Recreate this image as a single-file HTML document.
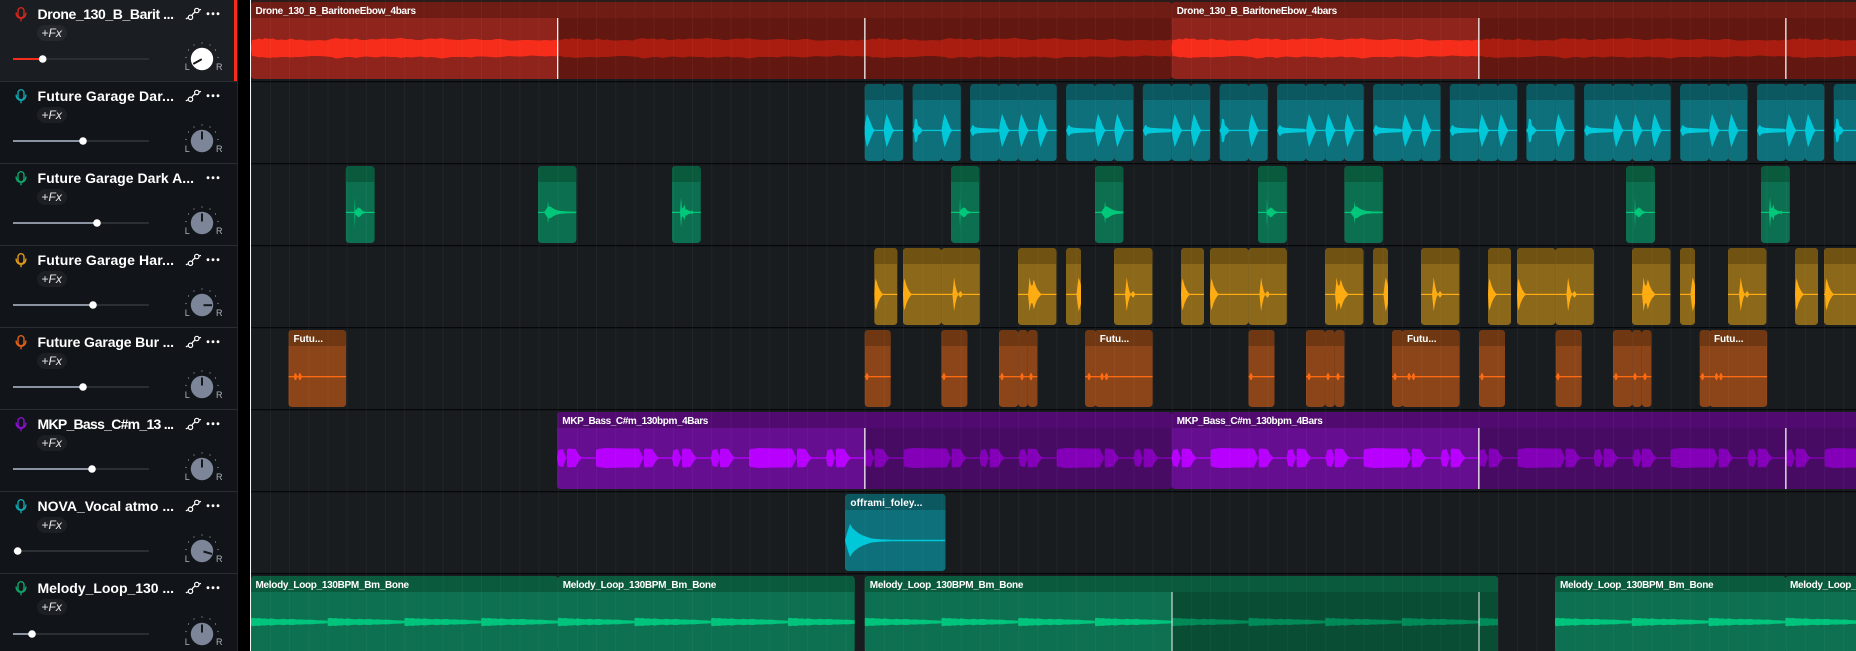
<!DOCTYPE html>
<html><head><meta charset="utf-8">
<style>
html,body{margin:0;padding:0;background:#000;width:1856px;height:651px;overflow:hidden}
svg{display:block;font-family:"Liberation Sans",sans-serif}
.r rect{height:77px;rx:3.5px;ry:3.5px}
.t{font-size:14px;font-weight:700;fill:#fff}
.h{font-size:10px;font-weight:700;fill:#fff}
.fx{font-size:12px;fill:#e8e9eb}
.lr{font-size:9px;fill:#b0b4bb}
</style></head><body>
<svg width="1856" height="651" viewBox="0 0 1856 651" xmlns="http://www.w3.org/2000/svg">
<defs>
<pattern id="grid" patternUnits="userSpaceOnUse" x="250.7" y="0" width="19.1875" height="651"><rect width="1" height="651" fill="#fff" fill-opacity=".04"/></pattern>
<clipPath id="hd"><rect x="0" y="0" width="1900" height="16"/></clipPath>

<path id="tT" d="M0 0L1.2-8L3-16.7L6-9.5L8-4.5L9.5-1.5L10.5-.7V.7L9.5 1.5L8 4.5L6 9.5L3 16.7L1.2 8Z"/>
<path id="tS" d="M0-1L1.5-2.5L2.5-12L4.5-11L5.5-5L7.5-3.5L9.5-1V1L7.5 3.5L5.5 5L4.5 11L2.5 12L1.5 2.5L0 1Z"/>
<path id="tL" d="M0 0L2-5L3-5.5L4.5-3.5L8-2.7L15-2.2L27-1.7L28.8-.7V.7L27 1.7L15 2.2L8 2.7L4.5 3.5L3 5.5L2 5Z"/>
<path id="gA" d="M8.5 0L9-15L9.5-2L11-3.5L12.5-5L14.5-4L16-2L18-1L20-.6V.6L18 1L16 2L14.5 4L12.5 5L11 3.5L9.5 2L9 15Z"/>
<path id="gB" d="M6 0L8-3L9.5-5L10-11L10.7-6L13-5.5L15-4L18-2.5L22-1.5L28-1L38-.7V.7L28 1L22 1.5L18 2.5L15 4L13 5.5L10.7 6L10 11L9.5 5L8 3Z"/>
<path id="gC" d="M8 0L9-15L10-4L11.5-5L12.5-8L13.5-3L15-3L16-2L19-1L20-2L21-1L22 0L21 1L20 2L19 1L16 2L15 3L13.5 3L12.5 8L11.5 5L10 4L9 15Z"/>
<path id="aA" d="M0 0L.7-12L1.5-16L3.5-9L5.5-4.5L7.5-1.5L8.5-.7V.7L7.5 1.5L5.5 4.5L3.5 9L1.5 16L.7 12Z"/>
<path id="aB" d="M11 0L12-10L12.7-17L14-9L15.5-3L16.5-1L17.5-1L18.5-3L19.5-3L21-.7V.7L19.5 3L18.5 3L17.5 1L16.5 1L15.5 3L14 9L12.7 17L12 10Z"/>
<path id="aC" d="M10 0L11-10L11.5-17L13-9L14.5-9L15.8-15L18-8L20-4L23-.7V.7L20 4L18 8L15.8 15L14.5 9L13 9L11.5 17L11 10Z"/>
<path id="aD" d="M10.5 0L11.5-9L12.7-17L14-13L15-9V9L14 13L12.7 17L11.5 9Z"/>
<path id="oD" d="M0 0L1.5-3.5L2.5-3.5L4 0L2.5 3.5L1.5 3.5Z"/>
<g id="oF"><use href="#oD" x="5"/><use href="#oD" x="9.5"/></g>
<path id="of" d="M0 0L2.5-9L5-16.5L7-13L10-10L14-7L18-5L22-3.5L27-2L35-1.2L47-.8L100-.7V.7L47 .8L35 1.2L27 2L22 3.5L18 5L14 7L10 10L7 13L5 16.5L2.5 9Z"/>

<path id="pl" d="M0 0L1.5-8L6-9L9 0L6 9L1.5 8Z"/>
<path id="pb" d="M0-8L1-9.5L8.5-9L11-4.5L14-1V1L11 4.5L8.5 9L1 9.5L0 8Z"/>
<path id="pB" d="M0-7.5L1.5-9L10-10L30-9.5L43-9.5L47-1V1L43 9.5L30 9.5L10 10L1.5 9L0 7.5Z"/>
<g id="pw">
<rect x="0" y="-.7" width="307" height="1.4"/>
<use href="#pl" x="0"/><use href="#pb" x="10"/><use href="#pB" x="39"/><use href="#pb" x="87"/>
<use href="#pl" x="115"/><use href="#pb" x="125"/><use href="#pl" x="154"/><use href="#pb" x="163"/>
<use href="#pB" x="192"/><use href="#pb" x="240"/><use href="#pl" x="269"/><use href="#pb" x="279"/>
</g>
<path id="dw" d="M0-2L1-8L5-8.5L8-9.5L11-8.5L14-10L18-9L22-9.5L26-8L30-8.5L35-8L40-9.5L45-8L50-8.5L55-7.5L60-7.5L68-8L75-7.5L80-9L85-10L90-9L95-9.5L100-8.5L105-9.5L110-8L115-8L120-9L125-8.5L132-9.5L140-9L145-9.5L150-10.3L155-9L160-9L165-8L170-8L175-9L180-9.5L185-9L190-10L195-9L200-8.5L208-8L215-8.5L220-9L225-9L232-8L240-8L245-9L250-9L258-7.5L265-7.5L272-8L280-8L288-7.5L295-8L300-7.5L307-8.5V8.5L300 8L295 8.5L288 8L280 7.5L272 8.5L265 8.5L258 8L250 9L245 9.5L240 9L232 8.5L225 8.5L220 9.5L215 9L208 9L200 9L195 10L190 10.5L185 9.5L180 9L175 9.5L170 8.5L165 9L160 9.5L155 9L150 10L145 9L140 9L132 8.5L125 9.5L120 9L115 8.5L110 9L105 10L100 9L95 9L90 10L85 10.5L80 9L75 8.5L68 8L60 8L55 8.5L50 9L45 9L40 9.5L35 9L30 9L26 9.5L22 9.5L18 10L14 9.5L11 9L8 9.5L5 8.5L1 8L0 2Z"/>
<path id="mw" d="M0-3.6L2-4.2L5-3.6L8-4L11-3.4L14-3.6L17-3L20-3.6L24-3L28-2.6L32-3.2L36-2.6L42-3.1L46-2.4L50-2.6L55-2.2L60-2.4L66-1.8L72-1.6L76.7-1.2V1.2L72 1.6L66 1.8L60 2.4L55 2.2L50 2.6L46 2.4L42 3.1L36 2.6L32 3.2L28 2.6L24 3L20 3.6L17 3L14 3.6L11 3.4L8 4L5 3.6L2 4.2L0 3.6Z"/>
<g id="m4"><use href="#mw" x="0"/><use href="#mw" x="76.75"/><use href="#mw" x="153.5"/><use href="#mw" x="230.25"/></g>

<g id="r0" class="r"><rect x="251" width="921"/><rect x="1171.7" width="720"/></g>
<g id="r1" class="r">
<rect x="864.7" width="19.2"/><rect x="883.9" width="19.2"/>
<rect x="912.7" width="28.8"/><rect x="941.5" width="19.2"/>
<rect x="970.2" width="28.8"/><rect x="999" width="19.2"/><rect x="1018.2" width="19.2"/><rect x="1037.4" width="19.2"/>
<rect x="1066.2" width="28.8"/><rect x="1095" width="19.2"/><rect x="1114.2" width="19.2"/>
<rect x="1142.9" width="28.8"/><rect x="1171.7" width="19.2"/><rect x="1190.9" width="19.2"/>
<rect x="1219.7" width="28.8"/><rect x="1248.5" width="19.2"/>
<rect x="1277.2" width="28.8"/><rect x="1306" width="19.2"/><rect x="1325.2" width="19.2"/><rect x="1344.4" width="19.2"/>
<rect x="1373.2" width="28.8"/><rect x="1402" width="19.2"/><rect x="1421.2" width="19.2"/>
<rect x="1449.9" width="28.8"/><rect x="1478.7" width="19.2"/><rect x="1497.9" width="19.2"/>
<rect x="1526.4" width="28.8"/><rect x="1555.2" width="19.2"/>
<rect x="1584.2" width="28.8"/><rect x="1613" width="19.2"/><rect x="1632.2" width="19.2"/><rect x="1651.4" width="19.2"/>
<rect x="1680.2" width="28.8"/><rect x="1709" width="19.2"/><rect x="1728.2" width="19.2"/>
<rect x="1757" width="28.8"/><rect x="1785.8" width="19.2"/><rect x="1805" width="19.2"/>
<rect x="1833.8" width="28.8"/>
</g>
<g id="r2" class="r">
<rect x="345.8" width="28.8"/><rect x="538" width="38.4"/><rect x="672" width="28.8"/><rect x="951" width="28.4"/><rect x="1095" width="28.4"/><rect x="1258" width="28.8"/><rect x="1344.4" width="38.4"/><rect x="1626" width="29"/><rect x="1761" width="28.8"/>
</g>
<g id="r3" class="r">
<rect x="874.3" width="23"/><rect x="903" width="38.4"/><rect x="941.4" width="38.4"/><rect x="1018" width="38.4"/><rect x="1066" width="15"/><rect x="1114" width="38.4"/><rect x="1181" width="23"/><rect x="1210" width="38.4"/><rect x="1248.4" width="38.4"/><rect x="1325" width="38.4"/><rect x="1373" width="15"/><rect x="1421" width="38.4"/><rect x="1488" width="23"/><rect x="1517" width="38.4"/><rect x="1555.4" width="38.4"/><rect x="1632" width="38.4"/><rect x="1680" width="15"/><rect x="1728" width="38.4"/><rect x="1795" width="23"/><rect x="1824" width="38.4"/>
</g>
<g id="r4" class="r">
<rect x="288.5" width="57.6"/><rect x="864.7" width="26"/><rect x="941.4" width="26"/>
<rect x="999" width="19.2"/><rect x="1018.2" width="9.6"/><rect x="1027.8" width="9.6"/>
<rect x="1085" width="11"/><rect x="1095" width="57.6"/>
<rect x="1248.5" width="26"/>
<rect x="1306" width="19.2"/><rect x="1325.2" width="9.6"/><rect x="1334.8" width="9.6"/>
<rect x="1392" width="11"/><rect x="1402" width="57.6"/>
<rect x="1479" width="26"/><rect x="1555.7" width="26"/>
<rect x="1613" width="19.2"/><rect x="1632.2" width="9.6"/><rect x="1641.8" width="9.6"/>
<rect x="1699.7" width="11"/><rect x="1709.5" width="57.6"/>
</g>
<g id="r5" class="r"><rect x="557" width="615"/><rect x="1171.7" width="720"/></g>
<g id="r6" class="r"><rect x="845" width="100.5"/></g>
<g id="r7" class="r"><rect x="251" width="307"/><rect x="557.7" width="297"/><rect x="864.7" width="633.3"/><rect x="1555" width="231"/><rect x="1785.7" width="100"/></g>
<mask id="m0" maskUnits="userSpaceOnUse" x="0" y="-100" width="1900" height="300"><use href="#r0" fill="#fff"/></mask>
<mask id="m1" maskUnits="userSpaceOnUse" x="0" y="-100" width="1900" height="300"><use href="#r1" fill="#fff"/></mask>
<mask id="m2" maskUnits="userSpaceOnUse" x="0" y="-100" width="1900" height="300"><use href="#r2" fill="#fff"/></mask>
<mask id="m3" maskUnits="userSpaceOnUse" x="0" y="-100" width="1900" height="300"><use href="#r3" fill="#fff"/></mask>
<mask id="m4m" maskUnits="userSpaceOnUse" x="0" y="-100" width="1900" height="300"><use href="#r4" fill="#fff"/></mask>
<mask id="m5" maskUnits="userSpaceOnUse" x="0" y="-100" width="1900" height="300"><use href="#r5" fill="#fff"/></mask>
<mask id="m6" maskUnits="userSpaceOnUse" x="0" y="-100" width="1900" height="300"><use href="#r6" fill="#fff"/></mask>
<mask id="m7" maskUnits="userSpaceOnUse" x="0" y="-100" width="1900" height="300"><use href="#r7" fill="#fff"/></mask>

<g id="mic" fill="none" stroke-width="1.4"><rect x="18" y="7.7" width="6" height="10" rx="3"/><path d="M16.2 12.5v1a4.8 4.8 0 0 0 9.6 0v-1M21 18.3v3"/></g>
<g id="lnk" fill="none" stroke="#fff" stroke-width="1.2"><circle cx="190.5" cy="17.3" r="2.2"/><circle cx="196.8" cy="10.5" r="2.2"/><path d="M185.8 18.8L188.3 17.8M192 15.5Q193 13.2 195 12.2M199 10L201 9.4"/></g>
<g id="dots" fill="#fff"><circle cx="208" cy="13.7" r="1.4"/><circle cx="213" cy="13.7" r="1.4"/><circle cx="218" cy="13.7" r="1.4"/></g>
<g id="tk" fill="#9aa0a8"><circle cx="202" cy="43" r=".6"/><circle cx="194" cy="45" r=".6"/><circle cx="210" cy="45" r=".6"/><circle cx="188.5" cy="50" r=".6"/><circle cx="215.5" cy="50" r=".6"/><circle cx="186" cy="57.5" r=".6"/><circle cx="218" cy="57.5" r=".6"/></g>
</defs>

<!-- left panel -->
<rect x="0" y="0" width="238" height="651" fill="#111418"/>
<rect x="0" y="0" width="238" height="82" fill="#1a1d21"/>
<rect x="237" y="0" width="1" height="651" fill="#24272b"/>
<rect x="234" y="0" width="3" height="81" fill="#f52d1a"/>
<rect x="250" y="0" width="1" height="651" fill="#f4f4f4"/>

<g>
<use href="#mic" stroke="#d0281c"/>
<text class="t" x="37.5" y="19" textLength="136.5">Drone_130_B_Barit ...</text>
<use href="#lnk"/><use href="#dots"/>
<rect x="37" y="25" width="30" height="16" rx="8" fill="#25282d"/>
<text class="fx" x="41.5" y="36.8">+<tspan font-style="italic">Fx</tspan></text>
<rect x="13" y="58" width="136" height="2" fill="#2b2e33"/><rect x="13" y="58" width="30" height="2" fill="#f52d1a"/>
<circle cx="42.7" cy="59" r="3.8" fill="#fff"/>
<use href="#tk"/><circle cx="202" cy="59" r="11.2" fill="#fff"/>
<path d="M194 63.5L201 59.6" stroke="#15181b" stroke-width="2" stroke-linecap="round"/>
<text class="lr" x="184.8" y="70">L</text><text class="lr" x="216" y="70">R</text>
</g>
<rect x="0" y="81" width="237" height="1" fill="#2a2d31"/>

<g transform="translate(0,82)">
<use href="#mic" stroke="#0fa5ad"/>
<text class="t" x="37.5" y="19" textLength="136.5">Future Garage Dar...</text>
<use href="#lnk"/><use href="#dots"/>
<rect x="37" y="25" width="30" height="16" rx="8" fill="#1c1f24"/>
<text class="fx" x="41.5" y="36.8">+<tspan font-style="italic">Fx</tspan></text>
<rect x="13" y="58" width="136" height="2" fill="#2b2e33"/><rect x="13" y="58" width="70" height="2" fill="#8b92a0"/>
<circle cx="83" cy="59" r="3.8" fill="#fff"/>
<use href="#tk"/><circle cx="202" cy="59" r="11.2" fill="#7d8699"/>
<path d="M202 49.5V57.5" stroke="#15181b" stroke-width="2"/>
<text class="lr" x="184.8" y="70">L</text><text class="lr" x="216" y="70">R</text>
</g>
<rect x="0" y="163" width="237" height="1" fill="#2a2d31"/>

<g transform="translate(0,164)">
<use href="#mic" stroke="#0fa468"/>
<text class="t" x="37.5" y="19" textLength="156.5">Future Garage Dark A...</text>
<use href="#dots"/>
<rect x="37" y="25" width="30" height="16" rx="8" fill="#1c1f24"/>
<text class="fx" x="41.5" y="36.8">+<tspan font-style="italic">Fx</tspan></text>
<rect x="13" y="58" width="136" height="2" fill="#2b2e33"/><rect x="13" y="58" width="84" height="2" fill="#8b92a0"/>
<circle cx="97" cy="59" r="3.8" fill="#fff"/>
<use href="#tk"/><circle cx="202" cy="59" r="11.2" fill="#7d8699"/>
<path d="M202 49.5V57.5" stroke="#15181b" stroke-width="2"/>
<text class="lr" x="184.8" y="70">L</text><text class="lr" x="216" y="70">R</text>
</g>
<rect x="0" y="245" width="237" height="1" fill="#2a2d31"/>

<g transform="translate(0,246)">
<use href="#mic" stroke="#e09a18"/>
<text class="t" x="37.5" y="19" textLength="136.5">Future Garage Har...</text>
<use href="#lnk"/><use href="#dots"/>
<rect x="37" y="25" width="30" height="16" rx="8" fill="#1c1f24"/>
<text class="fx" x="41.5" y="36.8">+<tspan font-style="italic">Fx</tspan></text>
<rect x="13" y="58" width="136" height="2" fill="#2b2e33"/><rect x="13" y="58" width="80" height="2" fill="#8b92a0"/>
<circle cx="93" cy="59" r="3.8" fill="#fff"/>
<use href="#tk"/><circle cx="202" cy="59" r="11.2" fill="#7d8699"/>
<path d="M203.5 59.2H212" stroke="#15181b" stroke-width="2"/>
<text class="lr" x="184.8" y="70">L</text><text class="lr" x="216" y="70">R</text>
</g>
<rect x="0" y="327" width="237" height="1" fill="#2a2d31"/>

<g transform="translate(0,328)">
<use href="#mic" stroke="#e0601a"/>
<text class="t" x="37.5" y="19" textLength="136.5">Future Garage Bur ...</text>
<use href="#lnk"/><use href="#dots"/>
<rect x="37" y="25" width="30" height="16" rx="8" fill="#1c1f24"/>
<text class="fx" x="41.5" y="36.8">+<tspan font-style="italic">Fx</tspan></text>
<rect x="13" y="58" width="136" height="2" fill="#2b2e33"/><rect x="13" y="58" width="70" height="2" fill="#8b92a0"/>
<circle cx="83" cy="59" r="3.8" fill="#fff"/>
<use href="#tk"/><circle cx="202" cy="59" r="11.2" fill="#7d8699"/>
<path d="M202 49.5V57.5" stroke="#15181b" stroke-width="2"/>
<text class="lr" x="184.8" y="70">L</text><text class="lr" x="216" y="70">R</text>
</g>
<rect x="0" y="409" width="237" height="1" fill="#2a2d31"/>

<g transform="translate(0,410)">
<use href="#mic" stroke="#8a10d0"/>
<text class="t" x="37.5" y="19" textLength="136.5">MKP_Bass_C#m_13 ...</text>
<use href="#lnk"/><use href="#dots"/>
<rect x="37" y="25" width="30" height="16" rx="8" fill="#1c1f24"/>
<text class="fx" x="41.5" y="36.8">+<tspan font-style="italic">Fx</tspan></text>
<rect x="13" y="58" width="136" height="2" fill="#2b2e33"/><rect x="13" y="58" width="79" height="2" fill="#8b92a0"/>
<circle cx="92" cy="59" r="3.8" fill="#fff"/>
<use href="#tk"/><circle cx="202" cy="59" r="11.2" fill="#7d8699"/>
<path d="M202 49.5V57.5" stroke="#15181b" stroke-width="2"/>
<text class="lr" x="184.8" y="70">L</text><text class="lr" x="216" y="70">R</text>
</g>
<rect x="0" y="491" width="237" height="1" fill="#2a2d31"/>

<g transform="translate(0,492)">
<use href="#mic" stroke="#0fa5ad"/>
<text class="t" x="37.5" y="19" textLength="136.5">NOVA_Vocal atmo ...</text>
<use href="#lnk"/><use href="#dots"/>
<rect x="37" y="25" width="30" height="16" rx="8" fill="#1c1f24"/>
<text class="fx" x="41.5" y="36.8">+<tspan font-style="italic">Fx</tspan></text>
<rect x="13" y="58" width="136" height="2" fill="#2b2e33"/>
<circle cx="17.7" cy="59" r="3.8" fill="#fff"/>
<use href="#tk"/><circle cx="202" cy="59" r="11.2" fill="#7d8699"/>
<path d="M203.5 59.5L212 62" stroke="#15181b" stroke-width="2"/>
<text class="lr" x="184.8" y="70">L</text><text class="lr" x="216" y="70">R</text>
</g>
<rect x="0" y="573" width="237" height="1" fill="#2a2d31"/>

<g transform="translate(0,574)">
<use href="#mic" stroke="#0fa468"/>
<text class="t" x="37.5" y="19" textLength="136.5">Melody_Loop_130  ...</text>
<use href="#lnk"/><use href="#dots"/>
<rect x="37" y="25" width="30" height="16" rx="8" fill="#1c1f24"/>
<text class="fx" x="41.5" y="36.8">+<tspan font-style="italic">Fx</tspan></text>
<rect x="13" y="59" width="136" height="2" fill="#2b2e33"/><rect x="13" y="59" width="19" height="2" fill="#8b92a0"/>
<circle cx="32" cy="60" r="3.8" fill="#fff"/>
<use href="#tk"/><circle cx="202" cy="60" r="11.2" fill="#7d8699"/>
<path d="M202 50.5V58.5" stroke="#15181b" stroke-width="2"/>
<text class="lr" x="184.8" y="71">L</text><text class="lr" x="216" y="71">R</text>
</g>

<!-- timeline bg -->
<rect x="251" y="0" width="1605" height="651" fill="#181c1f"/>
<rect x="251" y="0" width="1605" height="2" fill="#2a1c1a"/>

<!-- row 0 drone -->
<g transform="translate(0,2)">
<use href="#r0" fill="#621810"/>
<g mask="url(#m0)">
<rect x="251" y="0" width="306.7" height="77" fill="#8e241c"/>
<rect x="1171.7" y="0" width="307" height="77" fill="#8e241c"/>
<g fill="#a81d10"><use href="#dw" x="557.7" y="46"/><use href="#dw" x="864.7" y="46"/><use href="#dw" x="1478.7" y="46"/><use href="#dw" x="1785.7" y="46"/></g>
<g fill="#f52d1a"><use href="#dw" x="251" y="46"/><use href="#dw" x="1171.7" y="46"/></g>
</g>
<g clip-path="url(#hd)"><use href="#r0" fill="#6e1c14"/></g>
<g fill="#f4f4f4"><rect x="557" y="16" width="1.3" height="61"/><rect x="864.2" y="16" width="1.3" height="61"/><rect x="1478.2" y="16" width="1.3" height="61"/><rect x="1785.2" y="16" width="1.3" height="61"/></g>
<text class="h" x="255.5" y="12" textLength="160.5">Drone_130_B_BaritoneEbow_4bars</text>
<text class="h" x="1176.7" y="12" textLength="160.5">Drone_130_B_BaritoneEbow_4bars</text>
</g>

<!-- row 1 teal -->
<g transform="translate(0,84)">
<use href="#r1" fill="#0d707a"/>
<g clip-path="url(#hd)"><use href="#r1" fill="#0b5860"/></g>
<g mask="url(#m1)" fill="#00c8d9">
<rect x="0" y="45.8" width="1856" height="1.3"/>
<use href="#tT" x="864" y="46.5"/><use href="#tT" x="883.6" y="46.5"/>
<use href="#tS" x="912.5" y="46.5"/><use href="#tT" x="941.5" y="46.5"/>
<use href="#tL" x="970.2" y="46.5"/><use href="#tT" x="999" y="46.5"/><use href="#tT" x="1018.2" y="46.5"/><use href="#tT" x="1037.4" y="46.5"/>
<use href="#tL" x="1066.2" y="46.5"/><use href="#tT" x="1095" y="46.5"/><use href="#tT" x="1114.2" y="46.5"/>
<use href="#tL" x="1142.9" y="46.5"/><use href="#tT" x="1171.7" y="46.5"/><use href="#tT" x="1190.9" y="46.5"/>
<use href="#tS" x="1219.5" y="46.5"/><use href="#tT" x="1248.5" y="46.5"/>
<use href="#tL" x="1277.2" y="46.5"/><use href="#tT" x="1306" y="46.5"/><use href="#tT" x="1325.2" y="46.5"/><use href="#tT" x="1344.4" y="46.5"/>
<use href="#tL" x="1373.2" y="46.5"/><use href="#tT" x="1402" y="46.5"/><use href="#tT" x="1421.2" y="46.5"/>
<use href="#tL" x="1449.9" y="46.5"/><use href="#tT" x="1478.7" y="46.5"/><use href="#tT" x="1497.9" y="46.5"/>
<use href="#tS" x="1526.4" y="46.5"/><use href="#tT" x="1555.2" y="46.5"/>
<use href="#tL" x="1584.2" y="46.5"/><use href="#tT" x="1613" y="46.5"/><use href="#tT" x="1632.2" y="46.5"/><use href="#tT" x="1651.4" y="46.5"/>
<use href="#tL" x="1680.2" y="46.5"/><use href="#tT" x="1709" y="46.5"/><use href="#tT" x="1728.2" y="46.5"/>
<use href="#tL" x="1757" y="46.5"/><use href="#tT" x="1785.8" y="46.5"/><use href="#tT" x="1805" y="46.5"/>
<use href="#tS" x="1833.8" y="46.5"/>
</g>
</g>

<!-- row 2 green -->
<g transform="translate(0,166)">
<use href="#r2" fill="#0c7050"/>
<g clip-path="url(#hd)"><use href="#r2" fill="#0a5a3e"/></g>
<g mask="url(#m2)" fill="#00c77a">
<rect x="0" y="45.8" width="1856" height="1.2"/>
<use href="#gA" x="345.8" y="46.4"/><use href="#gB" x="538" y="46.4"/><use href="#gC" x="672" y="46.4"/><use href="#gA" x="951" y="46.4"/><use href="#gB" x="1095" y="46.4"/><use href="#gA" x="1258" y="46.4"/><use href="#gB" x="1344.4" y="46.4"/><use href="#gA" x="1626" y="46.4"/><use href="#gC" x="1761" y="46.4"/>
</g>
</g>

<!-- row 3 amber -->
<g transform="translate(0,248)">
<use href="#r3" fill="#8b681a"/>
<g clip-path="url(#hd)"><use href="#r3" fill="#705312"/></g>
<g mask="url(#m3)" fill="#ffab12">
<rect x="0" y="45.8" width="1856" height="1.2"/>
<use href="#aA" x="874.3" y="46.4"/><use href="#aA" x="903" y="46.4"/><use href="#aB" x="941.4" y="46.4"/><use href="#aC" x="1018" y="46.4"/><use href="#aD" x="1066" y="46.4"/><use href="#aB" x="1114" y="46.4"/><use href="#aA" x="1181" y="46.4"/><use href="#aA" x="1210" y="46.4"/><use href="#aB" x="1248.4" y="46.4"/><use href="#aC" x="1325" y="46.4"/><use href="#aD" x="1373" y="46.4"/><use href="#aB" x="1421" y="46.4"/><use href="#aA" x="1488" y="46.4"/><use href="#aA" x="1517" y="46.4"/><use href="#aB" x="1555.4" y="46.4"/><use href="#aC" x="1632" y="46.4"/><use href="#aD" x="1680" y="46.4"/><use href="#aB" x="1728" y="46.4"/><use href="#aA" x="1795" y="46.4"/><use href="#aA" x="1825" y="46.4"/>
</g>
</g>

<!-- row 4 orange -->
<g transform="translate(0,330)">
<use href="#r4" fill="#8c4519"/>
<g clip-path="url(#hd)"><use href="#r4" fill="#6f3813"/></g>
<g mask="url(#m4m)" fill="#ff6a10">
<rect x="0" y="46" width="1856" height="1.3"/>
<use href="#oF" x="288.5" y="46.6"/><use href="#oD" x="865" y="46.6"/><use href="#oD" x="942" y="46.6"/>
<use href="#oD" x="1000" y="46.6"/><use href="#oD" x="1020" y="46.6"/><use href="#oD" x="1029" y="46.6"/>
<use href="#oD" x="1087" y="46.6"/><use href="#oF" x="1095" y="46.6"/>
<use href="#oD" x="1249" y="46.6"/>
<use href="#oD" x="1307" y="46.6"/><use href="#oD" x="1326" y="46.6"/><use href="#oD" x="1336" y="46.6"/>
<use href="#oD" x="1393" y="46.6"/><use href="#oF" x="1402" y="46.6"/>
<use href="#oD" x="1480" y="46.6"/><use href="#oD" x="1556" y="46.6"/>
<use href="#oD" x="1614" y="46.6"/><use href="#oD" x="1633" y="46.6"/><use href="#oD" x="1643" y="46.6"/>
<use href="#oD" x="1700.5" y="46.6"/><use href="#oF" x="1709.5" y="46.6"/>
</g>
<text class="h" x="293.5" y="12" textLength="29.5">Futu...</text>
<text class="h" x="1099.7" y="12" textLength="29.5">Futu...</text>
<text class="h" x="1407" y="12" textLength="29.5">Futu...</text>
<text class="h" x="1714" y="12" textLength="29.5">Futu...</text>
</g>

<!-- row 5 purple -->
<g transform="translate(0,412)">
<use href="#r5" fill="#470b64"/>
<g mask="url(#m5)">
<rect x="557" y="0" width="307.7" height="77" fill="#650e90"/>
<rect x="1171.7" y="0" width="307" height="77" fill="#650e90"/>
<g fill="#8400b8"><use href="#pw" x="864.7" y="46"/><use href="#pw" x="1478.7" y="46"/><use href="#pw" x="1785.7" y="46"/></g>
<g fill="#b800ff"><use href="#pw" x="557" y="46"/><use href="#pw" x="1171.7" y="46"/></g>
</g>
<g clip-path="url(#hd)"><use href="#r5" fill="#510b70"/></g>
<g fill="#f4f4f4"><rect x="864.2" y="16" width="1.3" height="61"/><rect x="1478.2" y="16" width="1.3" height="61"/><rect x="1785.2" y="16" width="1.3" height="61"/></g>
<text class="h" x="562.3" y="12" textLength="146">MKP_Bass_C#m_130bpm_4Bars</text>
<text class="h" x="1176.8" y="12" textLength="146">MKP_Bass_C#m_130bpm_4Bars</text>
</g>

<!-- row 6 -->
<g transform="translate(0,494)">
<use href="#r6" fill="#0d707a"/>
<g clip-path="url(#hd)"><use href="#r6" fill="#0b5860"/></g>
<g mask="url(#m6)" fill="#00c8d9"><use href="#of" x="845" y="46.5"/></g>
<text class="h" x="850.4" y="12" textLength="72">offrami_foley...</text>
</g>

<!-- row 7 melody -->
<g transform="translate(0,576)">
<use href="#r7" fill="#0d7050"/>
<g mask="url(#m7)">
<rect x="1171.7" y="0" width="326.3" height="77" fill="#094d35"/>
<g fill="#008a57"><use href="#m4" x="1171.7" y="46"/><use href="#m4" x="1478.7" y="46"/></g>
<g fill="#00c47c"><use href="#m4" x="251" y="46"/><use href="#m4" x="557.7" y="46"/><use href="#m4" x="864.7" y="46"/><use href="#m4" x="1555" y="46"/><use href="#m4" x="1785.7" y="46"/></g>
</g>
<g clip-path="url(#hd)"><use href="#r7" fill="#0a5a3d"/></g>
<g fill="#f4f4f4"><rect x="1171.5" y="16" width="1" height="61"/><rect x="1478.5" y="16" width="1" height="61"/></g>
<text class="h" x="255.5" y="12" textLength="153.6">Melody_Loop_130BPM_Bm_Bone</text>
<text class="h" x="562.7" y="12" textLength="153.6">Melody_Loop_130BPM_Bm_Bone</text>
<text class="h" x="869.8" y="12" textLength="153.6">Melody_Loop_130BPM_Bm_Bone</text>
<text class="h" x="1560" y="12" textLength="153.6">Melody_Loop_130BPM_Bm_Bone</text>
<text class="h" x="1790" y="12" textLength="153.6">Melody_Loop_130BPM_Bm_Bone</text>
</g>

<!-- separators + grid overlay -->
<g fill="#060708"><rect x="251" y="81" width="1605" height="1.3"/><rect x="251" y="163" width="1605" height="1.3"/><rect x="251" y="245" width="1605" height="1.3"/><rect x="251" y="327" width="1605" height="1.3"/><rect x="251" y="409" width="1605" height="1.3"/><rect x="251" y="491" width="1605" height="1.3"/><rect x="251" y="573" width="1605" height="1.3"/></g>
<rect x="251" y="0" width="1605" height="651" fill="url(#grid)"/>
</svg>
</body></html>
